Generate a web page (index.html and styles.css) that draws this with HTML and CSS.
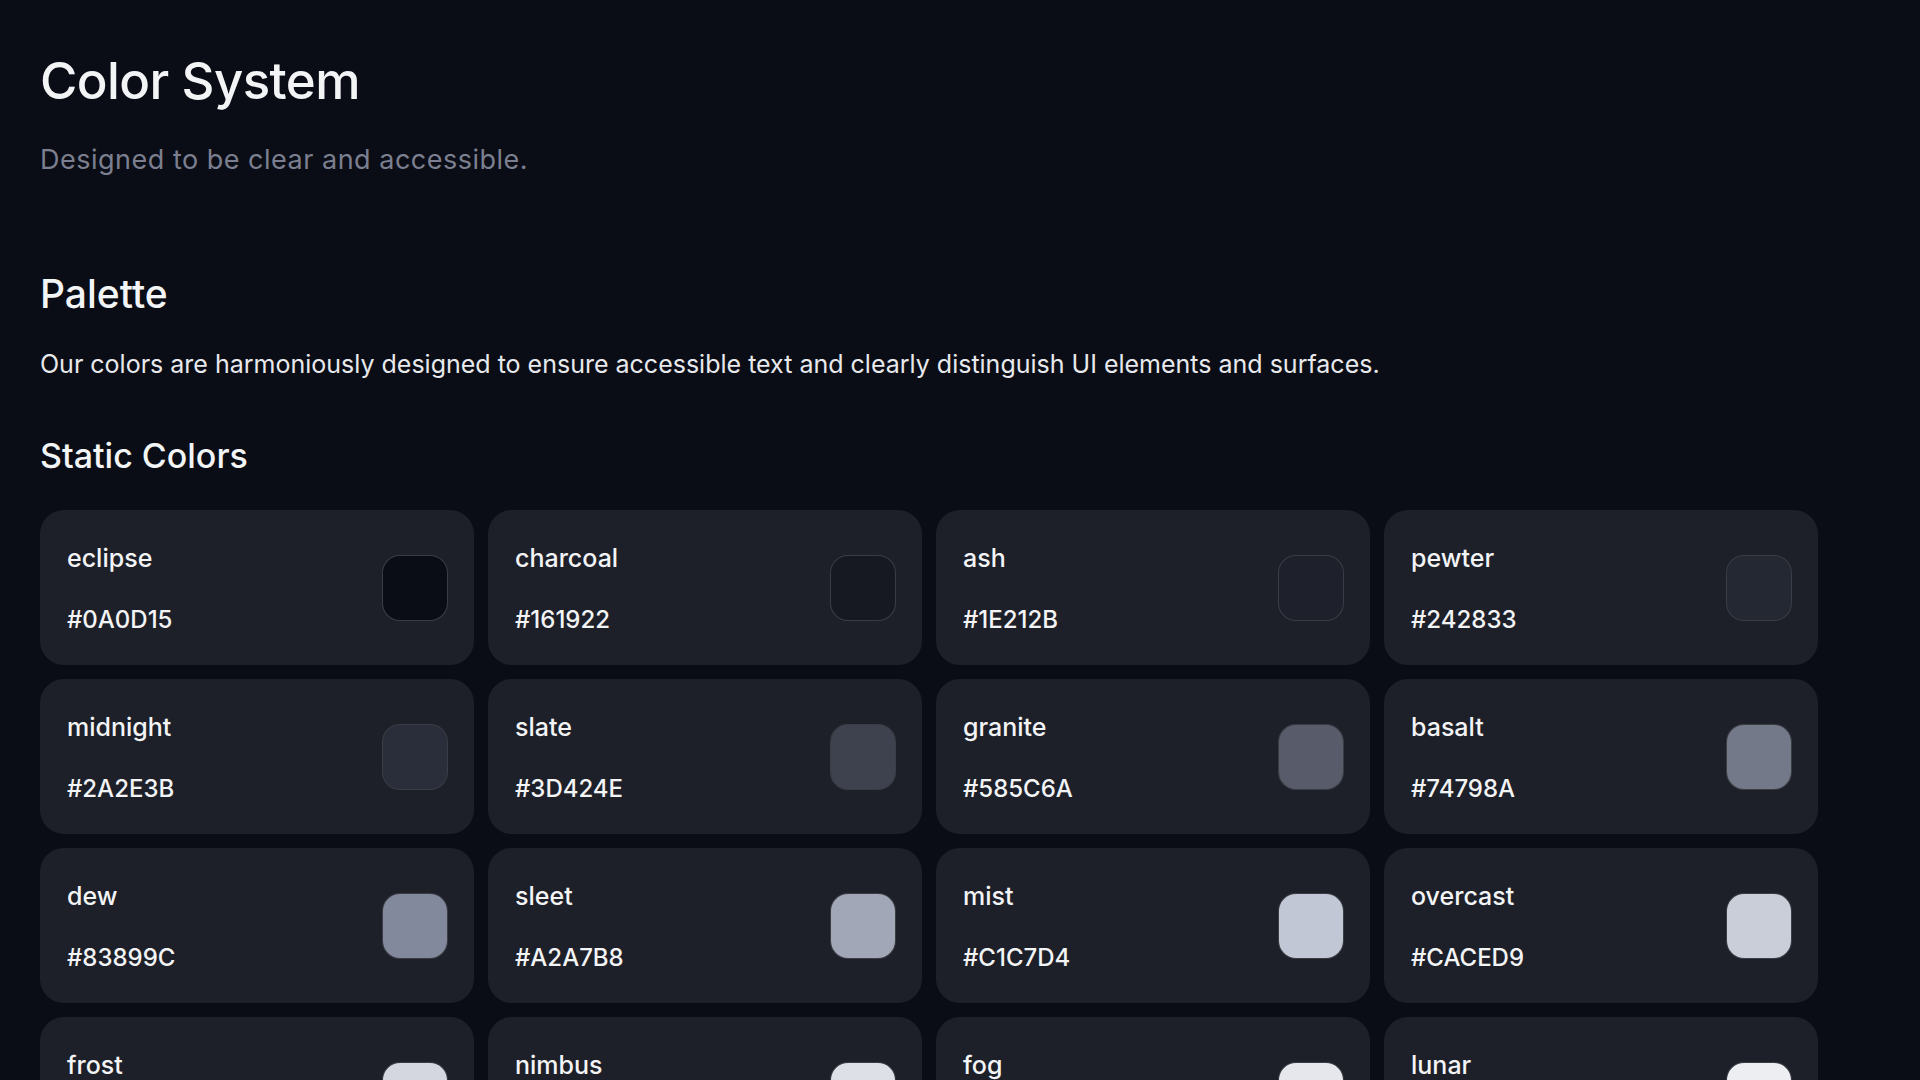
FILE: index.html
```html
<!DOCTYPE html>
<html lang="en">
<head>
<meta charset="UTF-8">
<title>Color System</title>
<link rel="stylesheet" href="styles.css">
</head>
<body>
<main class="page">
  <header class="intro">
    <h1 class="intro-title">Color System</h1>
    <p class="intro-lead">Designed to be clear and accessible.</p>
  </header>

  <section class="palette">
    <h2 class="section-title">Palette</h2>
    <p class="section-text">Our colors are harmoniously designed to ensure accessible text and clearly distinguish UI elements and surfaces.</p>

    <h3 class="group-title">Static Colors</h3>
    <div class="swatch-grid">
      <div class="swatch-card">
        <div class="swatch-info"><span class="swatch-name">eclipse</span><span class="swatch-hex">#0A0D15</span></div>
        <span class="swatch-chip" style="background-color:#0A0D15"></span>
      </div>
      <div class="swatch-card">
        <div class="swatch-info"><span class="swatch-name">charcoal</span><span class="swatch-hex">#161922</span></div>
        <span class="swatch-chip" style="background-color:#161922"></span>
      </div>
      <div class="swatch-card">
        <div class="swatch-info"><span class="swatch-name">ash</span><span class="swatch-hex">#1E212B</span></div>
        <span class="swatch-chip" style="background-color:#1E212B"></span>
      </div>
      <div class="swatch-card">
        <div class="swatch-info"><span class="swatch-name">pewter</span><span class="swatch-hex">#242833</span></div>
        <span class="swatch-chip" style="background-color:#242833"></span>
      </div>

      <div class="swatch-card">
        <div class="swatch-info"><span class="swatch-name">midnight</span><span class="swatch-hex">#2A2E3B</span></div>
        <span class="swatch-chip" style="background-color:#2A2E3B"></span>
      </div>
      <div class="swatch-card">
        <div class="swatch-info"><span class="swatch-name">slate</span><span class="swatch-hex">#3D424E</span></div>
        <span class="swatch-chip" style="background-color:#3D424E"></span>
      </div>
      <div class="swatch-card">
        <div class="swatch-info"><span class="swatch-name">granite</span><span class="swatch-hex">#585C6A</span></div>
        <span class="swatch-chip" style="background-color:#585C6A"></span>
      </div>
      <div class="swatch-card">
        <div class="swatch-info"><span class="swatch-name">basalt</span><span class="swatch-hex">#74798A</span></div>
        <span class="swatch-chip" style="background-color:#74798A"></span>
      </div>

      <div class="swatch-card">
        <div class="swatch-info"><span class="swatch-name">dew</span><span class="swatch-hex">#83899C</span></div>
        <span class="swatch-chip" style="background-color:#83899C"></span>
      </div>
      <div class="swatch-card">
        <div class="swatch-info"><span class="swatch-name">sleet</span><span class="swatch-hex">#A2A7B8</span></div>
        <span class="swatch-chip" style="background-color:#A2A7B8"></span>
      </div>
      <div class="swatch-card">
        <div class="swatch-info"><span class="swatch-name">mist</span><span class="swatch-hex">#C1C7D4</span></div>
        <span class="swatch-chip" style="background-color:#C1C7D4"></span>
      </div>
      <div class="swatch-card">
        <div class="swatch-info"><span class="swatch-name">overcast</span><span class="swatch-hex">#CACED9</span></div>
        <span class="swatch-chip" style="background-color:#CACED9"></span>
      </div>

      <div class="swatch-card">
        <div class="swatch-info"><span class="swatch-name">frost</span><span class="swatch-hex">#D4D7E0</span></div>
        <span class="swatch-chip" style="background-color:#D4D7E0"></span>
      </div>
      <div class="swatch-card">
        <div class="swatch-info"><span class="swatch-name">nimbus</span><span class="swatch-hex">#DDE0E7</span></div>
        <span class="swatch-chip" style="background-color:#DDE0E7"></span>
      </div>
      <div class="swatch-card">
        <div class="swatch-info"><span class="swatch-name">fog</span><span class="swatch-hex">#E5E7EC</span></div>
        <span class="swatch-chip" style="background-color:#E5E7EC"></span>
      </div>
      <div class="swatch-card">
        <div class="swatch-info"><span class="swatch-name">lunar</span><span class="swatch-hex">#EDEEF2</span></div>
        <span class="swatch-chip" style="background-color:#EDEEF2"></span>
      </div>
    </div>
  </section>
</main>
</body>
</html>
```

FILE: styles.css
```css
* {
	box-sizing: border-box;
}

body {
	margin: 0;
	background: #0a0d15;
	color: #f3f4f6;
	font-family: Inter, "Open Sans", sans-serif;
}

.page {
	padding: 0 40px 60px;
}

/* header */

.intro-title {
	margin: 0;
	padding-top: 51px;
	font-size: 51px;
	font-weight: 500;
	line-height: 60px;
	letter-spacing: -0.6px;
}

.intro-lead {
	margin: 31px 0 0;
	font-size: 27px;
	line-height: 36px;
	letter-spacing: 0.5px;
	color: #7b7f8f;
}

/* palette */

.section-title {
	margin: 93px 0 0;
	font-size: 39px;
	font-weight: 500;
	line-height: 46px;
}

.section-text {
	margin: 30px 0 0;
	font-size: 25px;
	line-height: 34px;
	color: #e8e9ed;
}

.group-title {
	margin: 55px 0 0;
	font-size: 34px;
	font-weight: 500;
	line-height: 40px;
}

.swatch-grid {
	display: grid;
	grid-template-columns: repeat(4, 434px);
	grid-auto-rows: 155px;
	gap: 14px;
	margin-top: 34px;
}

.swatch-card {
	display: flex;
	align-items: center;
	justify-content: space-between;
	padding: 0 26px 0 27px;
	background: #1e2029;
	border-radius: 24px;
}

.swatch-info {
	display: flex;
	flex-direction: column;
	gap: 32px;
	margin-top: 3px;
}

.swatch-name,
.swatch-hex {
	font-size: 24px;
	font-weight: 500;
	line-height: 30px;
}

.swatch-name {
	font-size: 25px;
}

.swatch-chip {
	width: 66px;
	height: 66px;
	border-radius: 18px;
	border: 1px solid rgba(255, 255, 255, 0.13);
	background-clip: padding-box;
}
```
